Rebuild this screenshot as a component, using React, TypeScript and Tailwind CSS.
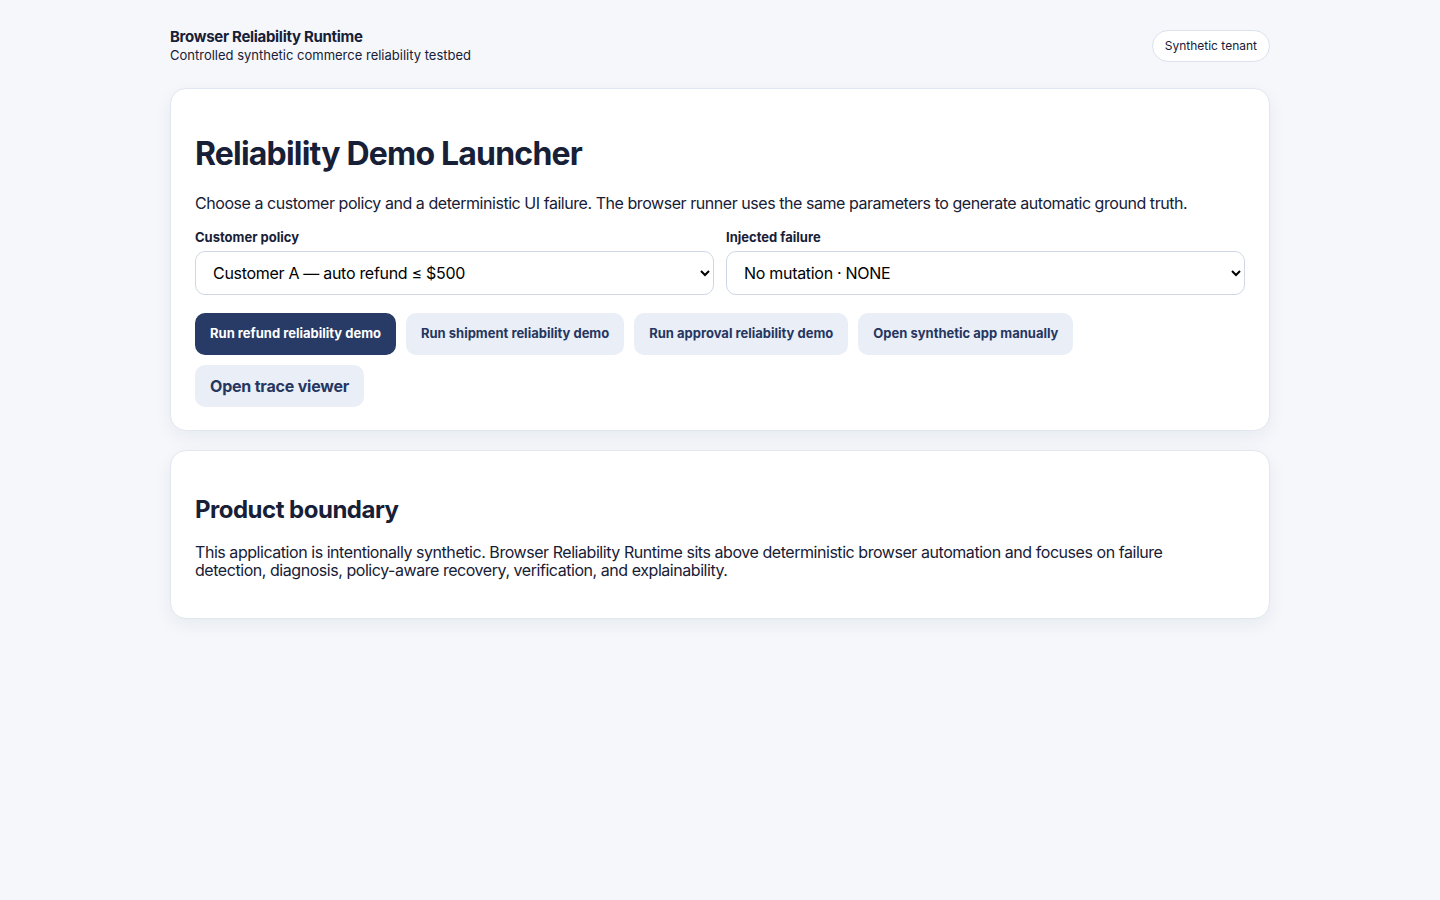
export default function App() {
  const btn2 = "h-[42px] px-[15px] rounded-[10px] bg-[#e9eef7] text-[#26365f] text-[13px] font-bold";
  return (
    <div className="min-h-screen bg-[#f5f7fb] text-[#172036]" style={{ fontFamily: "Inter, 'Liberation Sans', sans-serif" }}>
      <div className="w-[1100px] mx-auto pt-[28px]">
        <div className="flex items-center justify-between">
          <div>
            <div className="text-[15px] font-bold leading-[18px] tracking-[-0.3px]">Browser Reliability Runtime</div>
            <div className="text-[13px] leading-[18px]">Controlled synthetic commerce reliability testbed</div>
          </div>
          <div className="h-[32px] px-[12px] flex items-center rounded-full border border-[#dbe2ee] bg-white text-[12px]">Synthetic tenant</div>
        </div>
        <div className="mt-[24px] bg-white border border-[#e1e7f0] rounded-[16px] shadow-[0_6px_18px_rgba(20,30,60,0.06)] px-[24px] pt-[46px] pb-[23px]">
          <h1 className="text-[32px] font-bold leading-[38px] tracking-[-0.8px]">Reliability Demo Launcher</h1>
          <p className="mt-[20px] text-[16px] leading-[20px] tracking-[-0.45px]">Choose a customer policy and a deterministic UI failure. The browser runner uses the same parameters to generate automatic ground truth.</p>
          <div className="mt-[16px] grid grid-cols-2 gap-[12px]">
            <label className="flex flex-col gap-[6px]">
              <span className="text-[13px] font-bold leading-[16px]">Customer policy</span>
              <select className="h-[44px] px-[13px] rounded-[10px] border border-[#cfd7e6] bg-white text-[16px] text-black tracking-[-0.3px]">
                <option>Customer A — auto refund ≤ $500</option>
              </select>
            </label>
            <label className="flex flex-col gap-[6px]">
              <span className="text-[13px] font-bold leading-[16px]">Injected failure</span>
              <select className="h-[44px] px-[13px] rounded-[10px] border border-[#cfd7e6] bg-white text-[16px] text-black tracking-[-0.3px]">
                <option>No mutation · NONE</option>
              </select>
            </label>
          </div>
          <div className="mt-[18px] flex flex-wrap gap-[10px]">
            <button className="h-[42px] px-[15px] rounded-[10px] bg-[#283a66] text-white text-[13px] font-bold">Run refund reliability demo</button>
            <button className={btn2}>Run shipment reliability demo</button>
            <button className={btn2}>Run approval reliability demo</button>
            <button className={btn2}>Open synthetic app manually</button>
          </div>
          <button className="mt-[10px] h-[42px] px-[15px] rounded-[10px] bg-[#e9eef7] text-[#26365f] text-[16px] font-bold tracking-[-0.2px]">Open trace viewer</button>
        </div>
        <div className="mt-[19px] bg-white border border-[#e1e7f0] rounded-[16px] shadow-[0_6px_18px_rgba(20,30,60,0.06)] px-[24px] pt-[44px] pb-[39px]">
          <h2 className="text-[24px] font-bold leading-[29px] tracking-[-0.5px]">Product boundary</h2>
          <p className="mt-[19px] text-[16px] leading-[18px] pr-[60px] tracking-[-0.45px]">This application is intentionally synthetic. Browser Reliability Runtime sits above deterministic browser automation and focuses on failure detection, diagnosis, policy-aware recovery, verification, and explainability.</p>
        </div>
      </div>
    </div>
  );
}
